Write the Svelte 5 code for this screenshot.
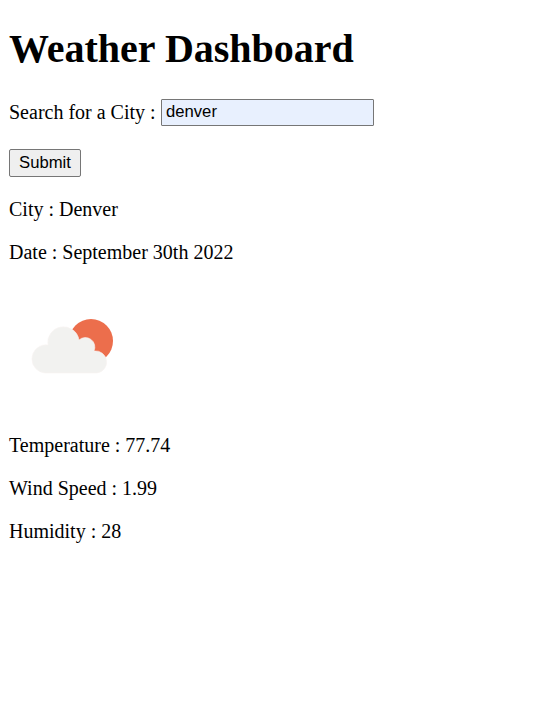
<script>
  const readings = [['Temperature', '77.74'], ['Wind Speed', '1.99'], ['Humidity', '28']];
  let city = $state('denver');
</script>

<main>
  <h1>Weather Dashboard</h1>
  <form onsubmit={(e) => e.preventDefault()}>
    <label for="city">Search for a City :</label>
    <input id="city" type="text" bind:value={city} />
    <button type="submit">Submit</button>
  </form>
  <p>City : Denver</p>
  <p>Date : September 30th 2022</p>
  <svg class="weather" width="125" height="125" viewBox="0 0 125 125" aria-label="few clouds">
    <circle cx="82" cy="57" r="22" fill="#ec6e4c" />
    <path d="M36 89a14 14 0 0 1-13-14a14 14 0 0 1 16-14a15.700 15.700 0 0 1 31-5a9.500 9.500 0 0 1 15 11a11 11 0 0 1 3 22z" fill="#f2f2f0" stroke="#f8f3f1" stroke-width="0.600" />
  </svg>
  {#each readings as [name, value]}
    <p>{name} : {value}</p>
  {/each}
</main>

<style>
  :global(body) { background: #fff; }
  main { padding: 24px 9px; font: 20px/23px "Liberation Serif", "Times New Roman", serif; color: #000; }
  h1 { margin: 0 0 26px; font-size: 40px; line-height: 49px; }
  form { display: grid; grid-template-columns: 147px 213px; justify-content: start; align-items: center; column-gap: 5px; row-gap: 23px; margin-bottom: 21px; }
  label { white-space: nowrap; }
  input { box-sizing: border-box; width: 213px; height: 27px; margin: 0; padding: 0 4px 1px; border: 1px solid #767676; border-radius: 1px; background: #e8f0fe; font: 16.667px "Liberation Sans", Arial, sans-serif; color: #000; }
  button { box-sizing: border-box; width: 72px; height: 28px; padding: 0; border: 1px solid #767676; border-radius: 2px; background: #efefef; font: 16.667px "Liberation Sans", Arial, sans-serif; color: #000; }
  p { margin: 20px 0; }
  .weather { display: block; margin-bottom: 25px; }
</style>
